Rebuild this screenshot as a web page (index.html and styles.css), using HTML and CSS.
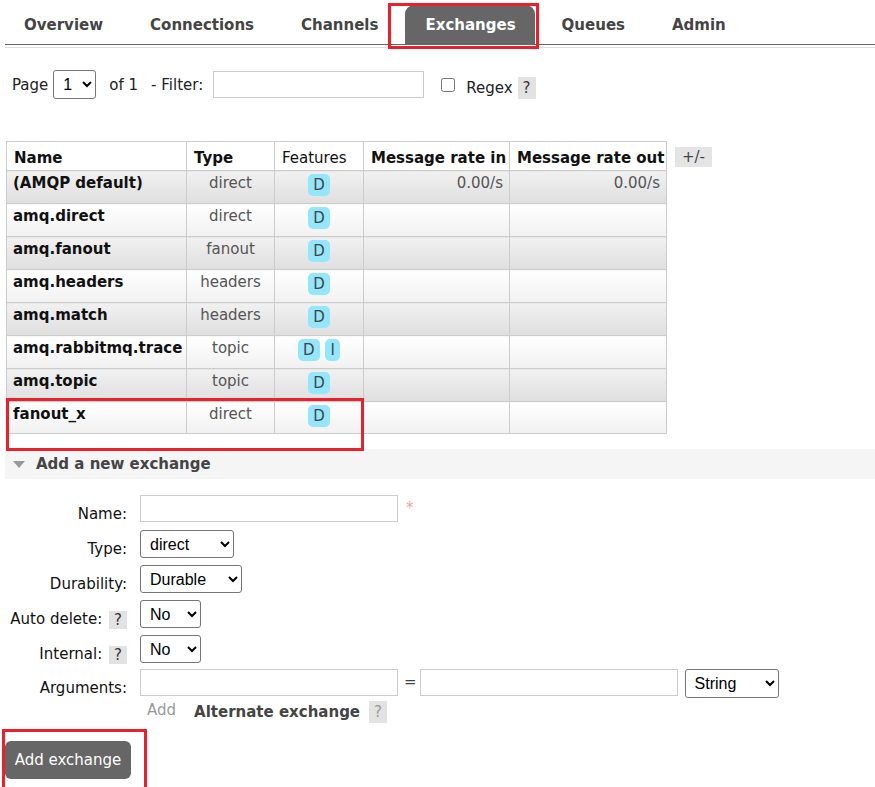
FILE: index.html
```html
<!DOCTYPE html>
<html lang="en">
<head>
<meta charset="utf-8">
<title>Exchanges</title>
<link rel="stylesheet" href="styles.css">
</head>
<body>
<div class="page">
  <nav class="tabs">
    <a class="tab first">Overview</a>
    <a class="tab">Connections</a>
    <a class="tab">Channels</a>
    <a class="tab active">Exchanges</a>
    <a class="tab">Queues</a>
    <a class="tab">Admin</a>
  </nav>
  <div class="tabrule"></div>

  <div class="filter">
    <span class="f-page">Page</span>
    <select class="sel s-page"><option>1</option></select>
    <span class="f-of">of 1</span>
    <span class="f-filter">- Filter:</span>
    <input class="txt f-input" type="text">
    <input class="f-check" type="checkbox">
    <span class="f-regex">Regex</span>
    <span class="help f-help">?</span>
  </div>

  <div class="listwrap">
    <table class="list">
      <colgroup>
        <col class="c-name"><col class="c-type"><col class="c-feat"><col class="c-in"><col class="c-out">
      </colgroup>
      <thead>
        <tr><th>Name</th><th>Type</th><th class="th-plain">Features</th><th>Message rate in</th><th>Message rate out</th></tr>
      </thead>
      <tbody>
        <tr class="alt1"><td class="n">(AMQP default)</td><td class="t">direct</td><td class="f"><span class="badge">D</span></td><td class="r">0.00/s</td><td class="r">0.00/s</td></tr>
        <tr class="alt2"><td class="n">amq.direct</td><td class="t">direct</td><td class="f"><span class="badge">D</span></td><td class="r"></td><td class="r"></td></tr>
        <tr class="alt1"><td class="n">amq.fanout</td><td class="t">fanout</td><td class="f"><span class="badge">D</span></td><td class="r"></td><td class="r"></td></tr>
        <tr class="alt2"><td class="n">amq.headers</td><td class="t">headers</td><td class="f"><span class="badge">D</span></td><td class="r"></td><td class="r"></td></tr>
        <tr class="alt1"><td class="n">amq.match</td><td class="t">headers</td><td class="f"><span class="badge">D</span></td><td class="r"></td><td class="r"></td></tr>
        <tr class="alt2"><td class="n">amq.rabbitmq.trace</td><td class="t">topic</td><td class="f"><span class="badge">D</span> <span class="badge">I</span></td><td class="r"></td><td class="r"></td></tr>
        <tr class="alt1"><td class="n">amq.topic</td><td class="t">topic</td><td class="f"><span class="badge">D</span></td><td class="r"></td><td class="r"></td></tr>
        <tr class="alt2"><td class="n">fanout_x</td><td class="t">direct</td><td class="f"><span class="badge">D</span></td><td class="r"></td><td class="r"></td></tr>
      </tbody>
    </table>
    <span class="toggle">+/-</span>
  </div>

  <div class="sect"><span class="tri"></span>Add a new exchange</div>

  <form class="form">
    <div class="frow">
      <label class="flabel">Name:</label>
      <div class="field"><input class="txt i-name" type="text"><span class="req">*</span></div>
    </div>
    <div class="frow">
      <label class="flabel">Type:</label>
      <div class="field"><select class="sel s-type"><option>direct</option><option>fanout</option><option>headers</option><option>topic</option></select></div>
    </div>
    <div class="frow">
      <label class="flabel">Durability:</label>
      <div class="field"><select class="sel s-dur"><option>Durable</option><option>Transient</option></select></div>
    </div>
    <div class="frow">
      <label class="flabel">Auto delete: <span class="help h-form">?</span></label>
      <div class="field"><select class="sel s-no"><option>No</option><option>Yes</option></select></div>
    </div>
    <div class="frow r-internal">
      <label class="flabel">Internal: <span class="help h-form">?</span></label>
      <div class="field"><select class="sel s-no"><option>No</option><option>Yes</option></select></div>
    </div>
    <div class="frow r-args">
      <label class="flabel">Arguments:</label>
      <div class="field">
        <input class="txt i-arg" type="text">
        <span class="eq">=</span>
        <input class="txt i-arg2" type="text">
        <select class="sel s-string"><option>String</option><option>Number</option><option>Boolean</option><option>List</option></select>
      </div>
    </div>
    <div class="subrow">
      <span class="addlink">Add</span>
      <span class="alt">Alternate exchange</span>
      <span class="help h-alt">?</span>
    </div>
    <button class="btn" type="button">Add exchange</button>
  </form>

  <div class="mark mark-tab"></div>
  <div class="mark mark-row"></div>
  <div class="mark mark-btn"></div>
</div>
</body>
</html>
```
FILE: styles.css
```css
* { box-sizing: border-box; }

html, body { background: #fff; }

body {
  margin: 0;
  font-family: "DejaVu Sans", Verdana, sans-serif;
  font-size: 15px;
  line-height: 18px;
  color: #222;
  overflow: hidden;
}

.page {
  position: relative;
  padding-left: 5px;
  min-height: 787px;
}

/* Form controls (base) */
.sel {
  font-family: "Liberation Sans", Arial, sans-serif;
  font-size: 16px;
  color: #000;
  background-color: #fff;
  border: 1px solid #767676;
  border-radius: 3px;
  padding: 0 2px 0 5px;
  margin: 0;
}
.txt {
  border: 1px solid #ccc;
  border-radius: 0;
  background: #fff;
  padding: 2px 4px;
  margin: 0;
  font-family: "Liberation Sans", Arial, sans-serif;
  font-size: 16px;
}

/* Tabs */
.tabs {
  display: flex;
  padding-top: 5px;
  border-bottom: 1px solid #666;
}
.tab {
  display: block;
  height: 39px;
  padding: 11px 20px 10px;
  margin-right: 7px;
  font-weight: bold;
  color: #444;
  border-radius: 9px 9px 0 0;
  white-space: nowrap;
}
.tab.first { margin-left: -1px; }
.tab.active { background: #666; color: #fff; padding: 11px 19px 10px 20px; }
.tabrule { height: 1px; background: #ddd; margin-top: 2px; }

/* Filter */
.filter {
  display: flex;
  align-items: center;
  height: 29px;
  margin-top: 22px;
  padding-left: 7px;
}
.f-page { margin-right: 5px; }
.f-of { margin-left: 13px; }
.f-filter { margin-left: 13px; }
.f-input { width: 211px; height: 27px; margin-left: 10px; }
.f-check { width: 14px; height: 14px; margin: 0 0 0 17px; }
.f-regex { margin-left: 11px; margin-top: 6px; }
.f-help { margin-left: 5px; margin-top: 6px; height: 22px; line-height: 22px; }

.s-page { width: 43px; height: 29px; }
.s-type { width: 94px; height: 28px; }
.s-dur { width: 102px; height: 28px; }
.s-no { width: 61px; height: 28px; }
.s-string { width: 94px; height: 29px; margin-left: 7px; }

.help {
  display: inline-block;
  width: 18px;
  height: 22px;
  line-height: 22px;
  text-align: center;
  background: #e2e2e2;
  color: #333;
}

/* Table */
.listwrap {
  display: flex;
  align-items: flex-start;
  margin-top: 42px;
  padding-left: 1px;
}
.list {
  border-collapse: collapse;
  table-layout: fixed;
  width: 660px;
}
.c-name { width: 180px; }
.c-type { width: 88px; }
.c-feat { width: 89px; }
.c-in { width: 146px; }
.c-out { width: 157px; }

.list th, .list td {
  border: 1px solid #ccc;
  white-space: nowrap;
  overflow: hidden;
}
.list th {
  text-align: left;
  font-weight: bold;
  color: #111;
  padding: 7px 4px 3px 7px;
  height: 29px;
  background: #fff;
}
.list th.th-plain { font-weight: normal; }
.list td {
  vertical-align: top;
  padding: 3px 6px 0 6px;
  height: 33px;
}
.list tr:last-child td { height: 32px; }
.list tr.alt1 td { background: linear-gradient(#f1f1f1, #dfdfdf); }
.list tr.alt2 td { background: linear-gradient(#ffffff, #f1f1f1); }
.list td.n { font-weight: bold; color: #111; }
.list td.t { text-align: center; color: #555; }
.list td.f { text-align: center; }
.list td.r { text-align: right; color: #555; }

.badge {
  display: inline-block;
  vertical-align: top;
  height: 22px;
  line-height: 22px;
  padding: 0 5px;
  border-radius: 5px;
  background: #94e6fc;
  color: #444;
}
.badge + .badge { margin-left: 1px; }

.toggle {
  margin-left: 8px;
  margin-top: 6px;
  height: 20px;
  line-height: 20px;
  padding: 0 7px;
  background: #e4e4e4;
  color: #444;
}

/* Section header */
.sect {
  display: flex;
  align-items: center;
  height: 30px;
  margin-top: 15px;
  padding-left: 8px;
  background: #f5f5f5;
  font-weight: bold;
  color: #444;
}
.tri {
  width: 0;
  height: 0;
  border-left: 6.5px solid transparent;
  border-right: 6.5px solid transparent;
  border-top: 7px solid #999;
  margin-right: 11px;
}

/* Form */
.form { margin-top: 16px; }
.frow { display: flex; height: 35px; }
.frow.r-internal { height: 34px; }
.frow.r-args { height: 32px; }
.flabel {
  width: 122px;
  margin-right: 13px;
  padding-top: 10px;
  text-align: right;
  white-space: nowrap;
  color: #111;
}
.h-form {
  height: 18px;
  line-height: 18px;
  vertical-align: top;
  margin-top: 1px;
  margin-left: 2px;
}
.field { display: flex; align-items: flex-start; }
.i-name { width: 258px; height: 27px; }
.req { color: #f7a0a8; margin-left: 8px; padding-top: 4px; }
.i-arg { width: 258px; height: 27px; }
.i-arg2 { width: 258px; height: 27px; }
.eq { line-height: 27px; margin: 0 3px 0 6px; color: #444; }

.subrow {
  display: flex;
  align-items: center;
  height: 22px;
  padding-left: 142px;
}
.addlink { color: #999; margin-bottom: 5px; }
.alt { margin-left: 18px; font-weight: bold; color: #444; }
.h-alt { margin-left: 9px; color: #999; }

.btn {
  display: block;
  margin-top: 18px;
  width: 126px;
  height: 38px;
  border: none;
  border-radius: 6px;
  background: #666;
  color: #fff;
  font-family: "DejaVu Sans", Verdana, sans-serif;
  font-size: 15px;
  padding: 0;
}

/* Red annotation boxes */
.mark {
  position: absolute;
  border: 3px solid #e8212b;
  pointer-events: none;
}
.mark-tab { left: 388px; top: 3px; width: 151px; height: 46px; }
.mark-row { left: 6px; top: 398px; width: 358px; height: 53px; }
.mark-btn { left: 2px; top: 729px; width: 145px; height: 90px; }
```
